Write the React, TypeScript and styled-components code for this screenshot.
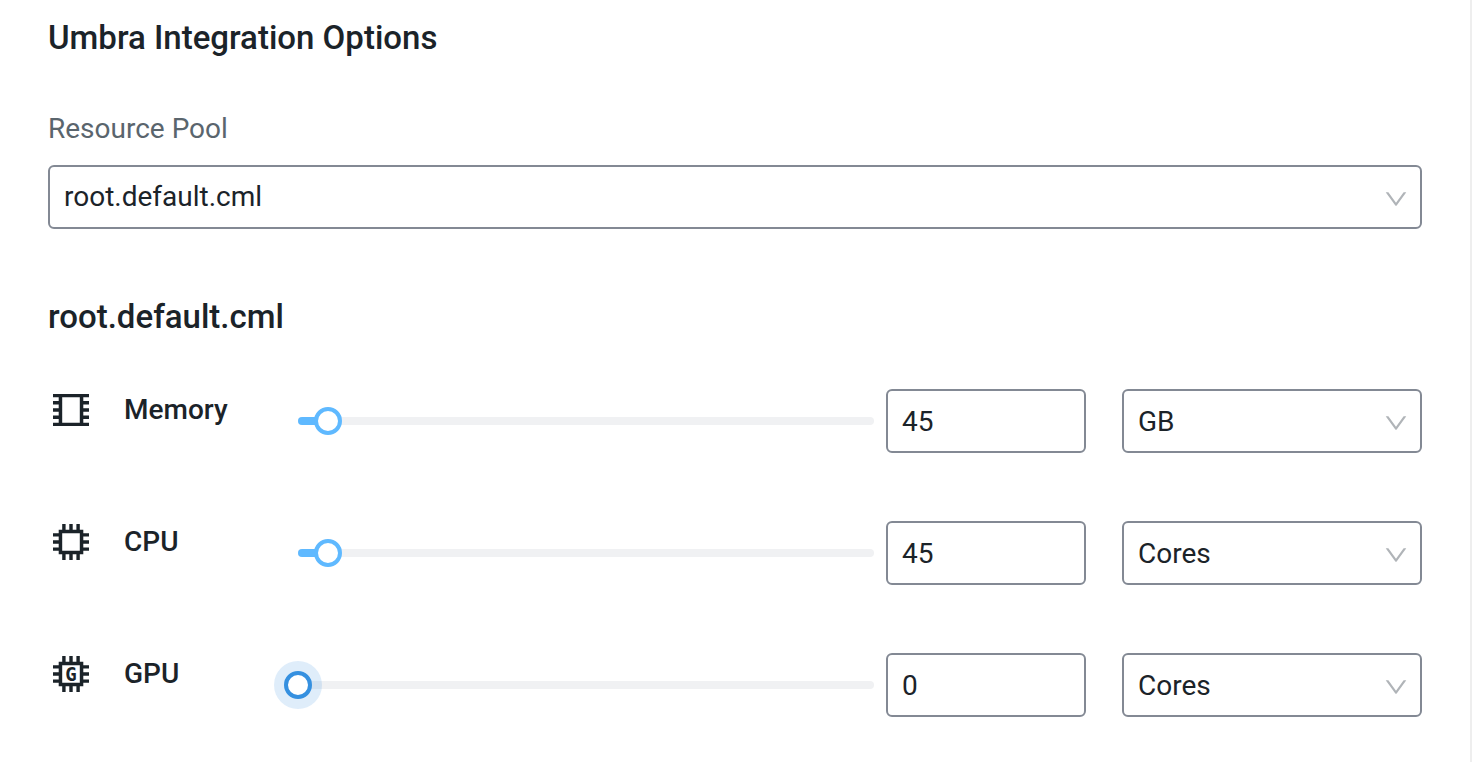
import React, { useState } from "react";
import styled, { createGlobalStyle } from "styled-components";

const GlobalStyle = createGlobalStyle`
  *, *::before, *::after { box-sizing: border-box; }
  body {
    margin: 0;
    background: #ffffff;
    color: #1b2329;
    font-family: Roboto, "Liberation Sans", sans-serif;
    font-size: 28px;
    line-height: 40px;
  }
`;

const Panel = styled.main`
  min-height: 100vh;
  padding: 18px 48px 44px;
  border-right: 2px solid #eeeeee;
`;

const Heading = styled.h2`
  margin: 0;
  font-size: 33px;
  line-height: 40px;
  font-weight: 500;
`;

const PoolField = styled.div`
  display: flex;
  flex-direction: column;
  gap: 16px;
  margin: 51px 0 68px;
`;

const FieldLabel = styled.label`
  color: #5a656d;
`;

const SelectBox = styled.div`
  position: relative;
`;

const Select = styled.select`
  appearance: none;
  display: block;
  width: 100%;
  height: 64px;
  padding: 0 48px 0 14px;
  border: 2px solid #838994;
  border-radius: 6px;
  background: #ffffff;
  color: inherit;
  font: inherit;
  outline: none;
`;

const Arrow = styled.svg`
  position: absolute;
  top: 22px;
  right: 14px;
  width: 24px;
  height: 24px;
  fill: #b0b4b8;
  pointer-events: none;
`;

const NumberInput = styled.input`
  width: 100%;
  height: 64px;
  padding: 0 14px;
  border: 2px solid #838994;
  border-radius: 6px;
  background: #ffffff;
  color: inherit;
  font: inherit;
  outline: none;
`;

const Rows = styled.div`
  display: flex;
  flex-direction: column;
  gap: 68px;
  margin-top: 52px;
`;

const Row = styled.div`
  display: grid;
  grid-template-columns: 250px minmax(0, 1fr) 200px 336px;
`;

const RowLabel = styled.label`
  display: flex;
  align-items: center;
  align-self: start;
  gap: 35px;
  height: 42px;
  padding-left: 5px;
  font-weight: 500;
`;

const Icon = styled.svg`
  width: 36px;
  height: 36px;
  flex: none;
  fill: #1b2329;
`;

const IconLetter = styled.text`
  font-family: "DejaVu Sans Mono", monospace;
  font-size: 19px;
  font-weight: 700;
  text-anchor: middle;
`;

const SliderBox = styled.div`
  position: relative;
  display: flex;
  align-items: center;
  margin-right: 12px;
`;

const Rail = styled.div`
  width: 100%;
  height: 8px;
  border-radius: 4px;
  background: #f0f1f3;
`;

const Fill = styled.div`
  height: 8px;
  border-radius: 4px;
  background: #5fb9ff;
`;

const Range = styled.input<{ $active: boolean }>`
  appearance: none;
  position: absolute;
  top: 0;
  left: -14px;
  width: calc(100% + 28px);
  height: 100%;
  margin: 0;
  background: transparent;
  outline: none;
  cursor: pointer;

  &::-webkit-slider-thumb {
    appearance: none;
    width: 28px;
    height: 28px;
    border: 4px solid ${(p) => (p.$active ? "#3590e0" : "#5fb9ff")};
    border-radius: 50%;
    background: #ffffff;
    box-shadow: ${(p) => (p.$active ? "0 0 0 10px rgba(53, 144, 224, 0.16)" : "none")};
  }
`;

const UnitBox = styled(SelectBox)`
  margin-left: 36px;
`;

const UnitSelect = styled(Select)`
  padding-top: 2px;
`;

const DropDownArrow = () => (
  <Arrow viewBox="64 64 896 896" aria-hidden="true">
    <path d="M884 256h-75c-5.100 0-9.900 2.500-12.900 6.600L512 654.200 227.900 262.600c-3-4.100-7.800-6.600-12.900-6.600h-75c-6.500 0-10.300 7.400-6.500 12.700l352.600 486.100c12.800 17.600 39 17.600 51.700 0l352.600-486.100c3.900-5.300.1-12.700-6.400-12.700z" />
  </Arrow>
);

const MemoryIcon = () => (
  <Icon viewBox="0 0 36 36" aria-hidden="true">
    <path
      fillRule="evenodd"
      d="M0 2H36V5.300H30.300V9H36V12.400H30.300V16.300H36V19.700H30.300V23.600H36V27H30.300V30.700H36V34H0V30.700H5.700V27H0V23.600H5.700V19.700H0V16.300H5.700V12.400H0V9H5.700V5.300H0ZM9.200 5.300V30.700H26.800V5.300Z"
    />
  </Icon>
);

const ChipShape = () => (
  <path
    fillRule="evenodd"
    d="M5.700 5.700H9.200V0H12.600V5.700H16.300V0H19.700V5.700H23.400V0H26.800V5.700H30.300V9.200H36V12.600H30.300V16.300H36V19.700H30.300V23.400H36V26.800H30.300V30.300H26.800V36H23.400V30.300H19.700V36H16.300V30.300H12.600V36H9.200V30.300H5.700V26.800H0V23.400H5.700V19.700H0V16.300H5.700V12.600H0V9.200H5.700ZM9.200 9.200V26.800H26.800V9.200Z"
  />
);

const CpuIcon = () => (
  <Icon viewBox="0 0 36 36" aria-hidden="true">
    <ChipShape />
  </Icon>
);

const GpuIcon = () => (
  <Icon viewBox="0 0 36 36" aria-hidden="true">
    <ChipShape />
    <IconLetter x="18" y="25">G</IconLetter>
  </Icon>
);

const MAX = 864;

interface ResourceProps {
  id: string;
  name: string;
  icon: React.ReactNode;
  initial: number;
  units: string[];
  active: boolean;
  onActivate: () => void;
}

function ResourceRow({ id, name, icon, initial, units, active, onActivate }: ResourceProps) {
  const [value, setValue] = useState(initial);
  const update = (e: React.ChangeEvent<HTMLInputElement>) =>
    setValue(Math.min(MAX, Math.max(0, Number(e.target.value) || 0)));
  return (
    <Row>
      <RowLabel htmlFor={id}>
        {icon}
        {name}
      </RowLabel>
      <SliderBox>
        <Rail>
          <Fill style={{ width: `${(value / MAX) * 100}%` }} />
        </Rail>
        <Range
          type="range"
          min={0}
          max={MAX}
          value={value}
          $active={active}
          aria-label={`${name} slider`}
          onChange={update}
          onFocus={onActivate}
        />
      </SliderBox>
      <NumberInput id={id} type="text" inputMode="numeric" value={value} onChange={update} />
      <UnitBox>
        <UnitSelect aria-label={`${name} unit`}>
          {units.map((u) => (
            <option key={u}>{u}</option>
          ))}
        </UnitSelect>
        <DropDownArrow />
      </UnitBox>
    </Row>
  );
}

const resources = [
  { id: "memory", name: "Memory", icon: <MemoryIcon />, initial: 45, units: ["GB"] },
  { id: "cpu", name: "CPU", icon: <CpuIcon />, initial: 45, units: ["Cores"] },
  { id: "gpu", name: "GPU", icon: <GpuIcon />, initial: 0, units: ["Cores"] },
];

export default function App() {
  const [active, setActive] = useState("gpu");
  return (
    <>
      <GlobalStyle />
      <Panel>
        <Heading>Umbra Integration Options</Heading>
        <PoolField>
          <FieldLabel htmlFor="pool">Resource Pool</FieldLabel>
          <SelectBox>
            <Select id="pool">
              <option>root.default.cml</option>
            </Select>
            <DropDownArrow />
          </SelectBox>
        </PoolField>
        <Heading>root.default.cml</Heading>
        <Rows>
          {resources.map((r) => (
            <ResourceRow
              key={r.id}
              {...r}
              active={active === r.id}
              onActivate={() => setActive(r.id)}
            />
          ))}
        </Rows>
      </Panel>
    </>
  );
}
